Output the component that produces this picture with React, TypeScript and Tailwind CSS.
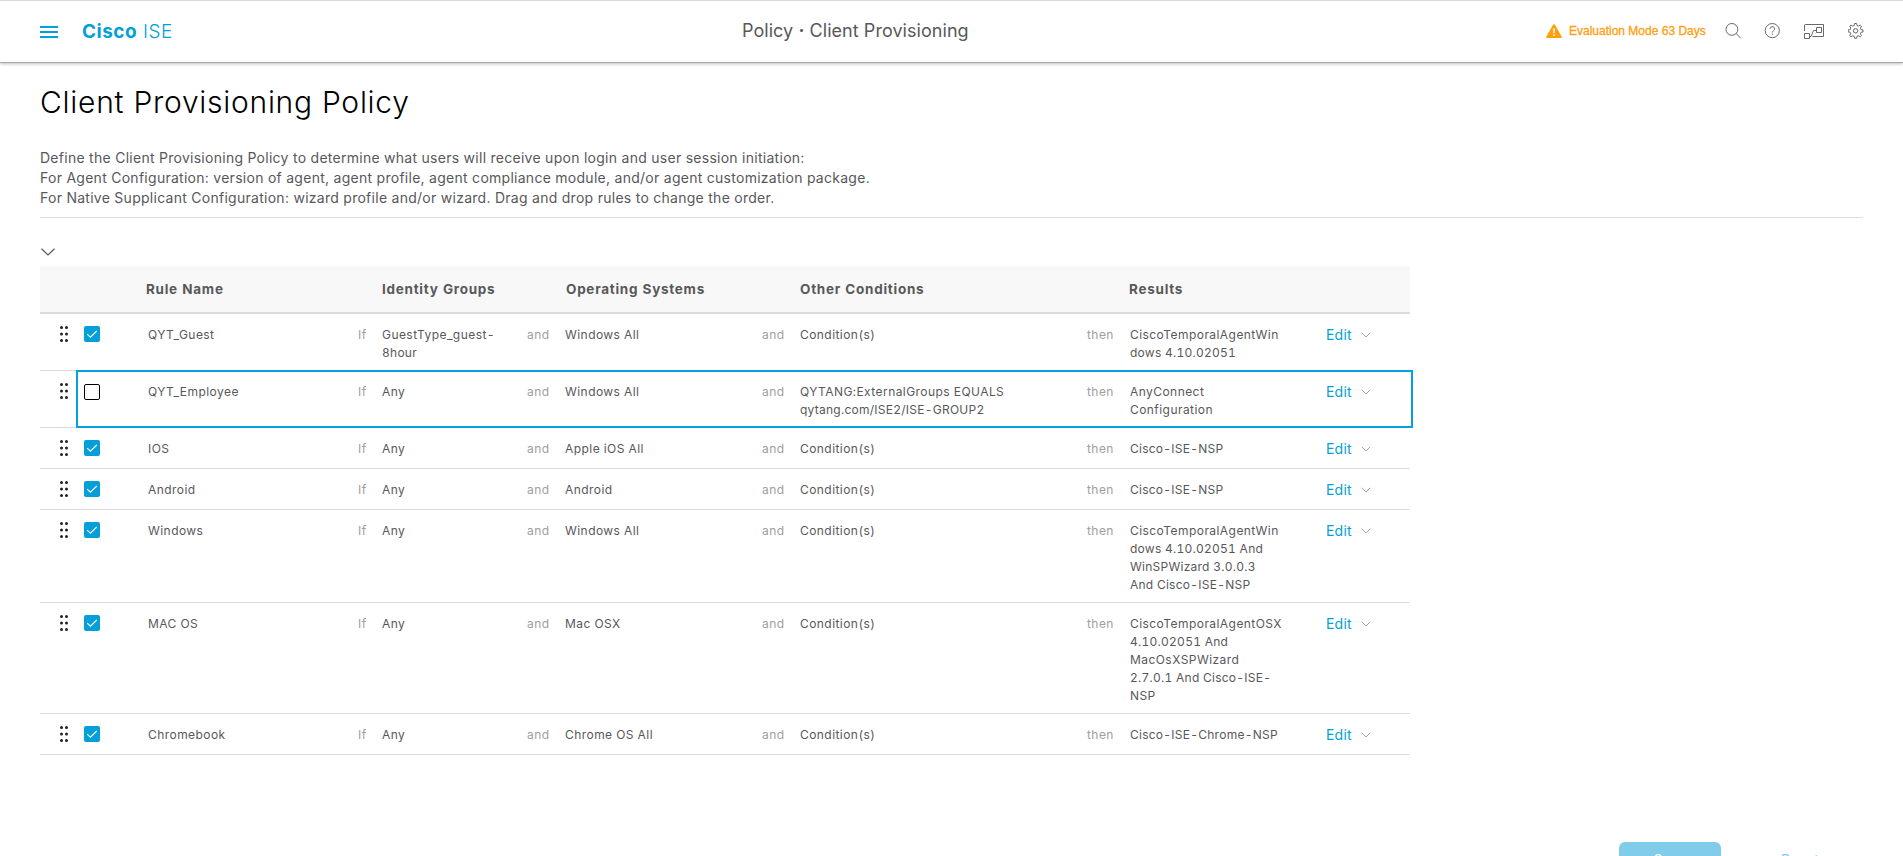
type Rule = {
  name: string;
  enabled: boolean;
  selected?: boolean;
  group: string[];
  os: string;
  conditions: string[];
  results: string[];
  height: string;
};

const rules: Rule[] = [
  { name: "QYT_Guest", enabled: true, group: ["GuestType_guest-", "8hour"], os: "Windows All", conditions: ["Condition(s)"], results: ["CiscoTemporalAgentWin", "dows 4.10.02051"], height: "h-[57px]" },
  { name: "QYT_Employee", enabled: false, selected: true, group: ["Any"], os: "Windows All", conditions: ["QYTANG:ExternalGroups EQUALS", "qytang.com/ISE2/ISE-GROUP2"], results: ["AnyConnect", "Configuration"], height: "h-[57px]" },
  { name: "IOS", enabled: true, group: ["Any"], os: "Apple iOS All", conditions: ["Condition(s)"], results: ["Cisco-ISE-NSP"], height: "h-[41px]" },
  { name: "Android", enabled: true, group: ["Any"], os: "Android", conditions: ["Condition(s)"], results: ["Cisco-ISE-NSP"], height: "h-[41px]" },
  { name: "Windows", enabled: true, group: ["Any"], os: "Windows All", conditions: ["Condition(s)"], results: ["CiscoTemporalAgentWin", "dows 4.10.02051 And", "WinSPWizard 3.0.0.3", "And Cisco-ISE-NSP"], height: "h-[93px]" },
  { name: "MAC OS", enabled: true, group: ["Any"], os: "Mac OSX", conditions: ["Condition(s)"], results: ["CiscoTemporalAgentOSX", "4.10.02051 And", "MacOsXSPWizard", "2.7.0.1 And Cisco-ISE-", "NSP"], height: "h-[111px]" },
  { name: "Chromebook", enabled: true, group: ["Any"], os: "Chrome OS All", conditions: ["Condition(s)"], results: ["Cisco-ISE-Chrome-NSP"], height: "h-[41px]" },
];

const columns = "grid grid-cols-[44px_64px_210px_24px_145px_38px_197px_38px_287px_43px_196px_84px]";

function Lines({ items }: { items: string[] }) {
  return (
    <div className="pt-[11.5px] whitespace-nowrap">
      {items.map((t) => (
        <div key={t} className={/\d|-ISE/.test(t) ? "tracking-[0.25px]" : ""}>
          {t}
        </div>
      ))}
    </div>
  );
}

function Joiner({ word }: { word: string }) {
  return <div className="pt-[11.5px] text-[#9e9e9e]">{word}</div>;
}

function DragHandle() {
  return (
    <svg className="mt-3 ml-5 block h-4 w-2" viewBox="0 0 8 16" fill="#222">
      {[1.5, 8, 14.5].map((y) => (
        <g key={y}>
          <circle cx="1.5" cy={y} r="1.5" />
          <circle cx="6.5" cy={y} r="1.5" />
        </g>
      ))}
    </svg>
  );
}

function Checkbox({ checked }: { checked: boolean }) {
  if (!checked) return <div className="mt-[13px] size-4 rounded-[2px] border border-black bg-white" />;
  return (
    <div className="mt-3 size-4 rounded-[2px] bg-[#049fd9]">
      <svg className="block size-4" viewBox="0 0 16 16" fill="none" stroke="#fff" strokeWidth="1.1">
        <path d="M3.2 8.2 6.4 11.2 12.8 5" />
      </svg>
    </div>
  );
}

function RuleRow({ rule }: { rule: Rule }) {
  return (
    <div className={`${columns} ${rule.height} relative border-b border-[#dcdcdc]`}>
      <DragHandle />
      <Checkbox checked={rule.enabled} />
      <Lines items={[rule.name]} />
      <Joiner word="If" />
      <Lines items={rule.group} />
      <Joiner word="and" />
      <Lines items={[rule.os]} />
      <Joiner word="and" />
      <Lines items={rule.conditions} />
      <Joiner word="then" />
      <Lines items={rule.results} />
      <div className="flex pt-3 text-[14px] leading-[17px] tracking-[0.2px] text-[#049fd9]">
        <span className="w-[35px]">Edit</span>
        <svg className="mt-[6px] block h-[6px] w-[10px]" viewBox="0 0 10 6" fill="none" stroke="#a8a8a8" strokeWidth="1">
          <path d="M.8 .8 5 5 9.2 .8" />
        </svg>
      </div>
      {rule.selected && <div className="absolute -top-px -right-[3px] -bottom-px left-9 border-2 border-[#049fe5]" />}
    </div>
  );
}

export default function App() {
  return (
    <div className="flex h-[856px] w-full flex-col overflow-hidden bg-white font-['Inter','Open_Sans',sans-serif] text-[#58585b]">
      <header className="flex h-[63px] shrink-0 items-center border-t border-b border-t-[#d8d8d8] border-b-[#a9abab] pr-[39px] pl-10 shadow-[0_1px_3px_rgba(0,0,0,0.25)]">
        <svg className="block h-3 w-[18px]" viewBox="0 0 18 12" fill="#049fd9">
          <path d="M0 0h18v2H0zM0 5h18v2H0zM0 10h18v2H0z" />
        </svg>
        <div className="ml-6 w-[660px] pt-0.5 text-[19px] tracking-[0.5px] text-[#049fd9]">
          <span className="font-bold">Cisco</span> <span className="font-light">ISE</span>
        </div>
        <div className="pb-0.5 text-[18px] tracking-[0.05px] whitespace-nowrap">
          Policy <span className="font-bold">·</span> Client Provisioning
        </div>
        <div className="ml-auto flex items-center pb-px font-['Liberation_Sans',Arial,sans-serif] text-[12px] leading-[18px] text-[#ff9e0f]">
          <svg className="mr-[7px] block h-[14px] w-4" viewBox="0 0 16 14">
            <path fill="#ff9e0f" d="M8 .3a1 1 0 0 1 .9.5l6.900 12a.8.8 0 0 1-.7 1.200H.9a.8.8 0 0 1-.7-1.200l6.900-12A1 1 0 0 1 8 .3z" />
            <path fill="#fff" d="M7.100 4.500h1.800l-.3 4.800H7.400zM7.200 10.400h1.600V12H7.200z" />
          </svg>
          <span className="w-[156px] whitespace-nowrap [-webkit-text-stroke:0.3px]">Evaluation Mode 63 Days</span>
          <svg className="block size-4" viewBox="0 0 16 16" fill="none" stroke="#58585b" strokeWidth="0.9">
            <circle cx="6.900" cy="6.400" r="5.900" />
            <path d="m11.100 10.600 4.600 4.400" />
          </svg>
          <svg className="ml-[23px] block size-4" viewBox="0 0 16 16" fill="none" stroke="#58585b" strokeWidth="0.9">
            <circle cx="8.300" cy="7.600" r="7.100" />
            <path d="M6 5.900a2.300 2.200 0 1 1 3.400 1.900C8.600 8.300 8.300 8.600 8.300 9.500M8.300 10.700v1.200" />
          </svg>
          <svg className="ml-6 block h-4 w-5" viewBox="0 0 20 16" fill="none" stroke="#58585b" strokeWidth="0.9">
            <path d="M.5 8V2.500a1 1 0 0 1 1-1h18v12H8.500M.5 10.500h5v5h-5zM12.500 4.500h5v5h-5zM5.500 13.500H7L9.500 7.500h3" />
          </svg>
          <svg className="ml-6 block size-4" viewBox="0 0 16 16" fill="none" stroke="#58585b" strokeWidth="0.9">
            <path d="M6.600 .5h2l.4 2 1.500.6 1.700-1.100 1.300 1.300-1.100 1.700.6 1.500 2 .4v2l-2 .4-.6 1.500 1.100 1.700-1.300 1.300-1.700-1.100-1.500.6-.4 2h-2l-.4-2-1.500-.6-1.700 1.100-1.300-1.300 1.100-1.700-.6-1.500-2-.4v-2l2-.4.6-1.500-1.100-1.700 1.300-1.300 1.700 1.100 1.500-.6z" />
            <circle cx="7.600" cy="7.800" r="2.200" />
          </svg>
        </div>
      </header>

      <main className="flex shrink-0 flex-col px-10">
        <h1 className="mt-[17px] text-[30px] leading-[44px] font-light tracking-[0.73px] text-black">Client Provisioning Policy</h1>
        <div className="mt-6 h-[70px] border-b border-[#dcdcdc] text-[14px] leading-5 tracking-[0.27px] whitespace-nowrap">
          <p>Define the Client Provisioning Policy to determine what users will receive upon login and user session initiation:</p>
          <p>For Agent Configuration: version of agent, agent profile, agent compliance module, and/or agent customization package.</p>
          <p>For Native Supplicant Configuration: wizard profile and/or wizard. Drag and drop rules to change the order.</p>
        </div>
        <svg className="mt-[30px] ml-px block h-2 w-[14px]" viewBox="0 0 14 8" fill="none" stroke="#58585b" strokeWidth="1.2">
          <path d="M.5 .8 7 7 13.5 .8" />
        </svg>
        <section className="mt-[10px] w-[1370px] text-[12px] leading-[18px] tracking-[0.44px] tabular-nums">
          <div className={`${columns} h-12 items-center border-b-2 border-[#dcdcdc] bg-[#f8f8f8] text-[13.5px] font-bold tracking-[0.73px] whitespace-nowrap`}>
            <div className="col-start-3 -ml-0.5">Rule Name</div>
            <div className="col-start-5">Identity Groups</div>
            <div className="col-start-7 ml-px">Operating Systems</div>
            <div className="col-start-9">Other Conditions</div>
            <div className="col-start-11 -ml-px">Results</div>
          </div>
          {rules.map((r) => (
            <RuleRow key={r.name} rule={r} />
          ))}
        </section>
      </main>

      <footer className="mt-[87px] flex shrink-0 justify-end pr-[81px] text-[14px] leading-5 tracking-[0.2px]">
        <button className="h-9 w-[102px] rounded-[6px] bg-[#80cdeb] text-white">Save</button>
        <button className="h-9 w-[101px] pb-px pl-[60px] text-left text-[#80cdeb]">Reset</button>
      </footer>
    </div>
  );
}
